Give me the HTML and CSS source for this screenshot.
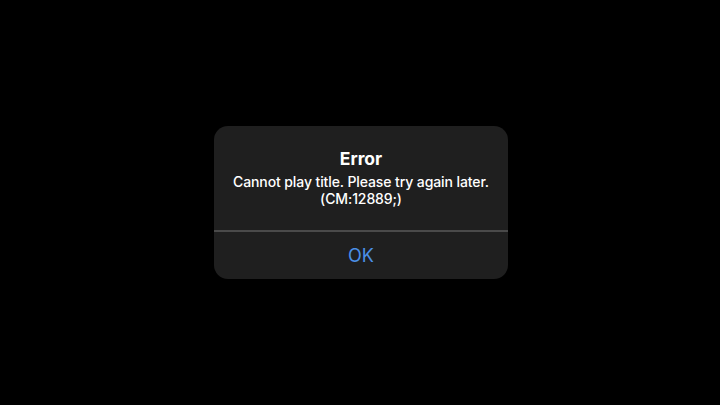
FILE: index.html
```html
<!DOCTYPE html>
<html>
<head>
<meta charset="utf-8">
<link rel="stylesheet" href="styles.css">
</head>
<body>
<div class="screen">
  <div class="alert">
    <div class="alert-body">
      <div class="alert-title">Error</div>
      <div class="alert-message">Cannot play title. Please try again later.<br>(CM:12889;)</div>
    </div>
    <div class="alert-divider"></div>
    <div class="alert-button">OK</div>
  </div>
</div>
</body>
</html>
```
FILE: styles.css
```css
html, body {
  margin: 0;
  padding: 0;
  background: #000;
}
.screen {
  width: 720px;
  height: 405px;
  display: flex;
  align-items: center;
  justify-content: center;
  font-family: "Inter", "Liberation Sans", sans-serif;
}
.alert {
  width: 294px;
  height: 153px;
  margin-left: 2px;
  background: #1f1f1f;
  border-radius: 14px;
  display: flex;
  flex-direction: column;
  overflow: hidden;
}
.alert-body {
  height: 104px;
  box-sizing: border-box;
  padding-top: 22px;
  text-align: center;
  color: #fff;
}
.alert-title {
  font-size: 17.5px;
  font-weight: 700;
  line-height: 22px;
}
.alert-message {
  font-size: 14px;
  font-weight: 500;
  line-height: 17px;
  letter-spacing: -0.1px;
  margin-top: 3px;
}
.alert-divider {
  height: 1.5px;
  background: #4a4a4a;
}
.alert-button {
  flex: 1;
  display: flex;
  align-items: center;
  justify-content: center;
  color: #4b8fe6;
  font-size: 18px;
}
```
